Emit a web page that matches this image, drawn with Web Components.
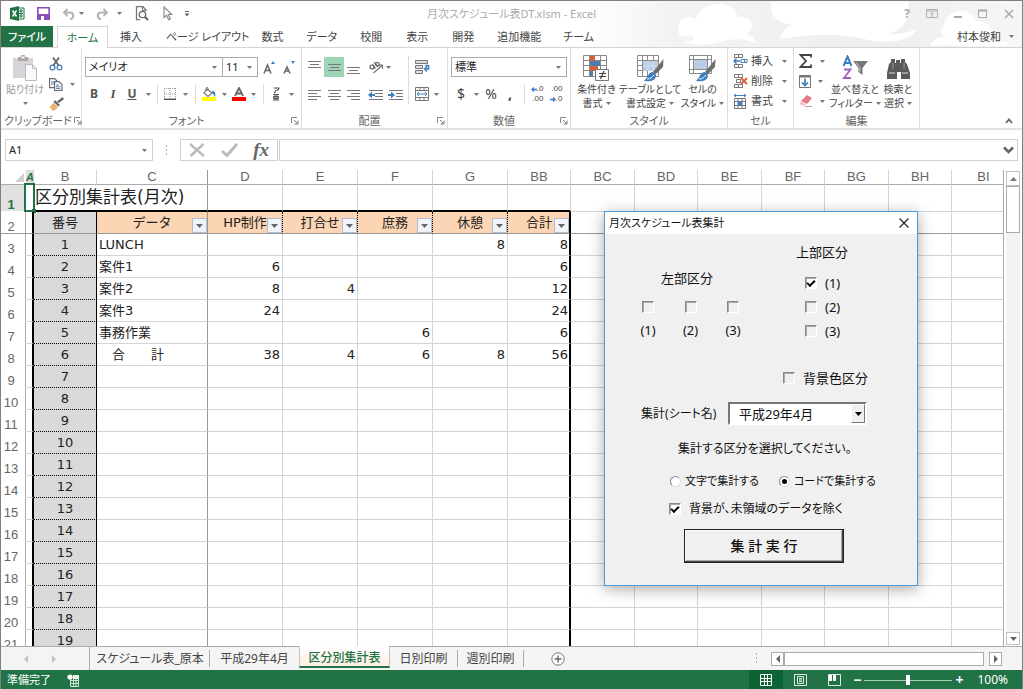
<!DOCTYPE html>
<html lang="ja">
<head>
<meta charset="utf-8">
<title>月次スケジュール表DT.xlsm - Excel</title>
<style>
html,body{margin:0;height:100%}
body{background:#d4d4d4;font:11px/14px "Noto Sans","Noto Sans CJK JP",sans-serif;font-feature-settings:"palt";color:#444}
</style>
</head>
<body>
<excel-app></excel-app>
<script>
const BASE = `*{box-sizing:border-box}
button{appearance:none;border:0;background:none;padding:0;margin:0;font:inherit;color:inherit;font-feature-settings:inherit;display:flex;align-items:center;justify-content:center}
a{color:inherit;text-decoration:none}`;

function define(name, html, setup) {
  const t = document.createElement('template');
  t.innerHTML = html.replace('<style>', '<style>' + BASE);
  customElements.define(name, class extends HTMLElement {
    constructor() {
      super();
      this.attachShadow({mode: 'open'}).append(t.content.cloneNode(true));
    }
    connectedCallback() { if (setup) setup(this, this.shadowRoot); }
  });
}

/* [width, height, markup] */
const lines = (rows) => rows.map(([x, y, w]) => `<path d="M${x} ${y}.5h${w}" stroke="#777"/>`).join('');
const grid = `<path d="M.5 .5h21v21h-21zM.5 5.5h21M.5 10.5h21M.5 15.5h21M5.5 .5v21M10.5 .5v21M16.5 .5v21" fill="#fff" stroke="#8a8a8a"/>`;
const brush = `<path d="M26.500 4L26 12L18.500 19.500L16 17z" fill="#6d6d6d"/><path d="M16 17c-5 0-4 4-9 9c6 1 12 0 12-6z" fill="#3f7fbf"/><path d="M10 24c4 0 5-2 7-4" stroke="#fff" fill="none"/>`;
const cells = `<path d="M1.5 .5h4v3h-4zM5.5 .5h4v3h-4zM1.5 10.5h4v3h-4zM5.5 10.5h4v3h-4z" fill="none" stroke="#777"/>`;
const ICONS = {
  arrow: [5, 3, `<path d="M0 0h5l-2.500 3z" fill="#777"/>`],
  excel: [15, 15, `<path d="M8 2h6v11H8z" fill="#fff" stroke="#217346"/><path d="M9 5h4M9 7.500h4M9 10h4M11 3v9" stroke="#217346"/><path d="M0 2l9-2v15l-9-2z" fill="#217346"/><path d="M2.500 4.500l4 6M6.500 4.500l-4 6" stroke="#fff" stroke-width="1.500"/>`],
  save: [13, 13, `<path d="M.8 .8h11.400v11.400H.8z" fill="none" stroke="#8a4fb8" stroke-width="1.600"/><path d="M1 7h11v5H1z" fill="#8a4fb8"/><path d="M4 9h3v4H4z" fill="#fff"/>`],
  undo: [14, 12, `<path d="M2 4.500h7a3.500 3.500 0 0 1 0 6.500H8M5.500 1L2 4.500L5.500 8" fill="none" stroke="#b4b4b4" stroke-width="2"/>`],
  redo: [14, 12, `<path d="M12 4.500H5a3.500 3.500 0 0 0 0 6.500h1M8.500 1L12 4.500L8.500 8" fill="none" stroke="#b4b4b4" stroke-width="2"/>`],
  preview: [14, 15, `<path d="M11 5V4L8 .7H1.500v13H5" fill="none" stroke="#777" stroke-width="1.300"/><path d="M7.500 1v3.500H11" fill="none" stroke="#777"/><circle cx="7.500" cy="8.500" r="3.200" fill="none" stroke="#666" stroke-width="1.300"/><path d="M10 11l3 3" stroke="#666" stroke-width="2"/>`],
  cursor: [10, 15, `<path d="M1 1v10.500l2.600-2.300l2 4.600l1.800-.8l-2-4.500h3.400z" fill="#fff" stroke="#8c8c8c" stroke-width="1.200"/>`],
  custom: [6, 6, `<path d="M1 .5h4" stroke="#666"/><path d="M.5 2.500h5L3 5.500z" fill="#666"/>`],
  wribbon: [12, 10, `<path d="M.5 .5h11v8h-11z" fill="none" stroke="#b0b0b0"/><path d="M.5 2h11" stroke="#b0b0b0"/><path d="M6 8V4M4 5.500l2-2l2 2" stroke="#b0b0b0" fill="none"/>`],
  wmin: [8, 10, `<path d="M0 8h8" stroke="#aaa" stroke-width="2"/>`],
  wmax: [10, 10, `<path d="M.5 1.500h8v7h-8z" fill="none" stroke="#aaa"/><path d="M0 1.500h9" stroke="#aaa" stroke-width="2"/>`],
  wclose: [10, 10, `<path d="M1 1l8 8M9 1L1 9" stroke="#aaa" stroke-width="1.600"/>`],
  paste: [26, 27, `<path d="M1 3h20v20H1z" fill="#d7d3d6"/><path d="M6 2h2.500l1-2h3l1 2H16v4H6z" fill="#aaa6a9"/><path d="M9.500 1.500h3v2h-3z" fill="#fff"/><path d="M13.500 9.500h7l4 4v12h-11z" fill="#fbfafc" stroke="#bcb8c0"/><path d="M20.500 9.500v4h4" fill="none" stroke="#bcb8c0"/>`],
  cut: [14, 14, `<path d="M4 .5l6 8.500M10 .5L4 9" stroke="#666" stroke-width="1.800"/><circle cx="3.500" cy="10.500" r="2.400" fill="none" stroke="#4a7eb5" stroke-width="1.300"/><circle cx="10.500" cy="10.500" r="2.400" fill="none" stroke="#4a7eb5" stroke-width="1.300"/>`],
  copy: [14, 13, `<path d="M.6 .6h5l3 3v6h-8z" fill="#fff" stroke="#666" stroke-width="1.100"/><path d="M2 4h3M2 6h3" stroke="#4a7eb5"/><path d="M5.600 3.600h4.400l3 3v6H5.600z" fill="#fff" stroke="#666" stroke-width="1.100"/><path d="M7 7h3M7 8.800h4.500M7 10.600h4.500" stroke="#4a7eb5"/>`],
  painter: [15, 14, `<path d="M13.500 0L15 2l-5 4l-2-1.500z" fill="#666"/><path d="M6 3l5 5l-1.500 1.500L4.500 5z" fill="#666"/><path d="M4 5.500L9 10c-2 3-5 4-6 4c0-2-1-3-3-4c2-1 3-2 4-4.500z" fill="#edb26a"/>`],
  grow: [12, 13, `<path d="M8 3L10 0l2 3z" fill="#3f7fbf"/><path d="M1 12.500L4.500 4L8 12.500M2 9.500h5" stroke="#666" stroke-width="1.500" fill="none"/>`],
  shrink: [12, 13, `<path d="M8 0h4L10 3z" fill="#3f7fbf"/><path d="M1 12.500L4 6L7 12.500M2 10h4" stroke="#666" stroke-width="1.500" fill="none"/>`],
  borders: [12, 12, `<path d="M.5 0v11M6 0v11M11.500 0v11M0 .5h12M0 6h12" stroke="#999" stroke-dasharray="1 1"/><path d="M0 11.300h12" stroke="#555" stroke-width="1.400"/>`],
  fill: [14, 14, `<path d="M0 10h14v4H0z" fill="#ff0"/><path d="M5 2L10 6L6 9.500L2 6z" fill="#fff" stroke="#777" stroke-width="1.200"/><path d="M4 4V1c0-1 2-1 2 0v3" fill="none" stroke="#777"/><path d="M10 4c3 0 4 2 3 6c-1-1-1-3-3-4z" fill="#3f7fbf"/>`],
  fcolor: [14, 14, `<path d="M0 10h14v4H0z" fill="#f00"/><path d="M3 9L7 1L11 9M4.500 6.500h5" stroke="#666" stroke-width="1.800" fill="none"/>`],
  furi: [8, 14, `<path d="M1.500 1h5.500c0 1-1 2-2 2.500M4 2.500c0 2-1 3-2 3.500" fill="none" stroke="#555" stroke-width="1.200"/><path d="M1 7.500h6M1 13h6M3 7.500V13M5 7.500V13M1.500 9.500h5v2h-5z" fill="none" stroke="#555"/>`],
  top: [13, 13, lines([[0, 0, 13], [2, 3, 9], [0, 6, 13]])],
  middle: [13, 13, lines([[0, 3, 13], [2, 6, 9], [0, 9, 13]])],
  bottom: [13, 13, lines([[0, 6, 13], [2, 9, 9], [0, 12, 13]])],
  left: [13, 13, lines([[0, 2, 13], [0, 5, 9], [0, 8, 13], [0, 11, 9]])],
  center: [13, 13, lines([[0, 2, 13], [2, 5, 9], [0, 8, 13], [2, 11, 9]])],
  right: [13, 13, lines([[0, 2, 13], [4, 5, 9], [0, 8, 13], [4, 11, 9]])],
  orient: [15, 13, `<path d="M4.500 12L13 4.500M13.500 8V4H9.500" stroke="#777" stroke-width="1.200" fill="none"/><circle cx="3" cy="6" r="2" fill="none" stroke="#555" stroke-width="1.200"/><path d="M3.500 3.500L6.500 7.500M5 1L9 6" stroke="#555" stroke-width="1.200"/><circle cx="8.500" cy="3.300" r="1.800" fill="none" stroke="#555" stroke-width="1.200"/>`],
  outdent: [15, 13, lines([[1, 2, 14], [7, 5, 8], [7, 8, 8], [1, 11, 14]]) + `<path d="M0 7l4-3.500v2.500h3v2H4v2.500z" fill="#3f7fbf"/>`],
  indent: [15, 13, lines([[1, 2, 14], [8, 5, 7], [8, 8, 7], [1, 11, 14]]) + `<path d="M7 7L3 3.500v2.500H0v2h3v2.500z" fill="#3f7fbf"/>`],
  wrap: [15, 14, `<path d="M.5 .5h12v3H.5zM.5 5.500h7v3h-7zM.5 10.500h7v3h-7z" fill="#ddd" stroke="#777"/><path d="M10 5.500h3.500v3.500H10M12 6.500L9.500 9L12 11.500" fill="none" stroke="#3f7fbf" stroke-width="1.500"/>`],
  merge: [14, 14, `<path d="M.5 .5h13v13H.5zM.5 3.500h13M.5 10.500h13M5 .5v3M9 .5v3M5 10.500v3M9 10.500v3" fill="none" stroke="#777"/><path d="M2 7h10M4 5L2 7l2 2M10 5l2 2l-2 2" stroke="#3f7fbf" fill="none"/>`],
  decarrow: [6, 5, `<path d="M6 2.500H1M3 .5l-2 2l2 2" stroke="#3f7fbf" stroke-width="1.300" fill="none"/>`],
  incarrow: [6, 5, `<path d="M0 2.500h5M3 .5l2 2l-2 2" stroke="#3f7fbf" stroke-width="1.300" fill="none"/>`],
  cond: [27, 27, `<path d="M.5 .5h23v21H.5zM.5 5.500h23M.5 10.500h23M.5 15.500h23M6.500 .5v21M17.500 .5v21" fill="#fff" stroke="#8a8a8a"/><path d="M7 1h5v5H7z" fill="#d9603b"/><path d="M7 6h10v5H7z" fill="#4a7eb5"/><path d="M7 11h8v5H7z" fill="#d9603b"/><path d="M7 16h3v5H7z" fill="#4a7eb5"/><path d="M12.500 14.500h13v11h-13z" fill="#fff" stroke="#777"/><path d="M16 18.500h7M16 21.500h7M21 16l-3.500 8" stroke="#444" stroke-width="1.200"/>`],
  tfmt: [27, 27, grid + `<path d="M6 6h15v10H6z" fill="#b9cde5"/><path d="M11 6v10M16 6v10M6 11h15" stroke="#d6e2f0"/>` + brush],
  cstyle: [27, 27, `<path d="M.5 .5h22v18h-22zM.5 4.500h22M.5 14.500h22M4.500 .5v18M18.500 .5v18" fill="#fff" stroke="#8a8a8a"/><path d="M5 5h13v9H5z" fill="#b9cde5"/>` + brush],
  insert: [15, 14, cells + `<path d="M8 5.500h6v3H8zM11.500 5.500v3" fill="#fff" stroke="#4a7eb5"/><path d="M7 7H1M3.500 4.500L1 7l2.500 2.500" stroke="#3f7fbf" stroke-width="1.500" fill="none"/>`],
  remove: [15, 14, cells + `<path d="M3.500 5.500h4v3h-4z" fill="none" stroke="#777"/><path d="M8 4l6 6M14 4l-6 6" stroke="#d9603b" stroke-width="1.800"/>`],
  format: [15, 15, `<path d="M1.500 4.500h11v10h-11zM1.500 7.500h11M1.500 11.500h11M5 4.500v10M9 4.500v10" fill="none" stroke="#777"/><path d="M5 7h4v5H5z" fill="#3f7fbf"/><path d="M1 1.500h12M3 0L1 1.500L3 3M11 0l2 1.500L11 3" stroke="#3f7fbf" fill="none"/>`],
  sum: [14, 14, `<path d="M12 3.500V1H1.500l5.500 6l-5.500 6H12v-2.500" fill="none" stroke="#444" stroke-width="1.800"/>`],
  down: [12, 13, `<path d="M.5 .5h11v12H.5z" fill="#fff" stroke="#777"/><path d="M0 1.500h12" stroke="#777" stroke-width="2"/><path d="M6 3.500v7M3 7.500l3 3l3-3" fill="none" stroke="#3f7fbf" stroke-width="1.700"/>`],
  erase: [14, 12, `<path d="M8 0l5 3l-5 6l-6-3z" fill="#e87b8b"/><path d="M2 6.500l5 3l-1 1H3L.5 8.500z" fill="#f5bcc4"/><path d="M6 11.500h7" stroke="#aaa"/>`],
  sort: [27, 27, `<path d="M1.500 11L5.500 1.500L9.500 11M3 8h5" fill="none" stroke="#3f7fbf" stroke-width="2"/><path d="M2 14.500h6.500l-6.500 8.500h7" fill="none" stroke="#a05cc0" stroke-width="1.800"/><path d="M11 6h15l-5.500 7v7l-4-3v-4z" fill="#777"/><path d="M14 7.500l4 5v4" stroke="#ccc" fill="none"/>`],
  find: [24, 24, `<path d="M5 3h4v4h1v-3h4v3h1V3h4v3l2 2l3 9v6h-9v-7h-4v7H1v-6L3 8l2-2z" fill="#5a5a5a"/><path d="M3 17h6M16 17h6" stroke="#ddd"/><path d="M7 7v6M18 7v6" stroke="#999"/>`],
  launcher: [8, 8, `<path d="M.5 6V.5H6" fill="none" stroke="#888"/><path d="M3 3l3.500 3.500M7 3.500V7H3.500" stroke="#777" fill="none"/>`],
  up: [8, 6, `<path d="M1 5l3-3.500L7 5" fill="none" stroke="#666" stroke-width="1.800"/>`],
  vdots: [3, 11, `<path d="M1 1h1M1 5h1M1 9h1" stroke="#999" stroke-width="1.500"/>`],
  cancel: [16, 14, `<path d="M1 1l14 12M14.500 1L1.500 13" stroke="#bbb" stroke-width="2.400"/>`],
  ok: [17, 14, `<path d="M1 8l5 4.500L16 1" fill="none" stroke="#bbb" stroke-width="3"/>`],
  expand: [11, 8, `<path d="M1 1.500L5.500 6L10 1.500" fill="none" stroke="#666" stroke-width="2.600"/>`],
  corner: [9, 9, `<path d="M9 0v9H0z" fill="#d0d0d0"/>`],
  x: [10, 10, `<path d="M.5 .5l9 9M9.500 .5l-9 9" stroke="#222" stroke-width="1.200"/>`],
  black: [7, 4, `<path d="M0 0h7L3.500 4z" fill="#000"/>`],
  fdrop: [7, 4, `<path d="M0 0h7L3.500 4z" fill="#666"/>`],
  tl: [4, 8, `<path d="M4 0v8L0 4z" fill="#c4c4c4"/>`],
  tr: [4, 8, `<path d="M0 0v8l4-4z" fill="#c4c4c4"/>`],
  sl: [4, 8, `<path d="M4 0v8L0 4z" fill="#666"/>`],
  sr: [4, 8, `<path d="M0 0v8l4-4z" fill="#666"/>`],
  su: [7, 4, `<path d="M0 4h7L3.500 0z" fill="#777"/>`],
  plus: [14, 14, `<circle cx="7" cy="7" r="6.200" fill="#fff" stroke="#777"/><path d="M7 3.500v7M3.500 7h7" stroke="#666" stroke-width="1.400"/>`],
  macro: [13, 13, `<path d="M3.500 3.500h8v9h-8zM3.500 6.500h8M3.500 9.500h8M6.500 5v7.500M9 5v7.500" fill="none" stroke="#cfe3d6"/><path d="M6 1h6v4H6z" fill="#e6f2ea"/><circle cx="3" cy="3" r="2.600" fill="#fff"/>`],
  vnormal: [12, 12, `<path d="M.5 .5h11v11H.5zM.5 4.500h11M.5 7.500h11M4.500 .5v11M7.500 .5v11" fill="none" stroke="#fff"/>`],
  vpage: [13, 12, `<path d="M.5 .5h12v11H.5zM3.500 2.500h6v7h-6zM5 4.500h3M5 6h3M5 7.500h3" fill="none" stroke="#dcebe1"/>`],
  vbreak: [13, 12, `<path d="M.5 .5h12v11H.5z" fill="none" stroke="#dcebe1"/><path d="M1 1h3v6H1zM5 1h3v6H5z" fill="#fff"/>`],
};
define('ui-icon', `<style>:host{display:block;flex:none;line-height:0}svg{display:block}</style>`, (el, root) => {
  const [w, h, m] = ICONS[el.getAttribute('name')];
  root.innerHTML += `<svg width="${w}" height="${h}" viewBox="0 0 ${w} ${h}" fill="none" aria-hidden="true">${m}</svg>`;
});

define('combo-box', `<style>
:host{display:grid;height:20px;border:1px solid #ababab;background:#fff}
select{grid-area:1/1;appearance:none;border:0;background:none;width:100%;min-width:0;padding:0 0 0 3px;font:inherit;font-feature-settings:inherit;color:#222}
ui-icon{grid-area:1/1;place-self:center end;margin-right:5px;pointer-events:none}
</style><select><option></option></select><ui-icon name="arrow"></ui-icon>`, (el, root) => {
  root.querySelector('option').textContent = el.getAttribute('value');
  root.querySelector('select').setAttribute('aria-label', el.getAttribute('label'));
});

define('title-bar', `<style>
:host{display:grid;grid-template-columns:1fr auto 1fr;align-items:center;height:25px}
.q,.w{display:flex;align-items:center}
.q{padding-left:9px}
.q button{width:28px}
.q .save{width:36px}
.q .undo{width:16px}
.q .redo{width:26px;margin-left:4px}
.q .d{width:8px}
.q .d+.view{margin-left:5px}
.q .pick{width:24px}
.q .more{width:14px}
.w{justify-content:flex-end;padding-right:8px;gap:16px;font-weight:700;font-size:12px;color:#aaa}
h1{margin:0;font-size:11px;font-weight:400;color:#aaa}
</style>
<div class="q"><ui-icon name="excel"></ui-icon><button class="save" aria-label="上書き保存"><ui-icon name="save"></ui-icon></button><button class="undo" aria-label="元に戻す"><ui-icon name="undo"></ui-icon></button><button class="d" aria-label="一覧"><ui-icon name="arrow"></ui-icon></button><button class="redo" aria-label="やり直し"><ui-icon name="redo"></ui-icon></button><button class="d" aria-label="一覧"><ui-icon name="arrow"></ui-icon></button><button class="view" aria-label="印刷プレビュー"><ui-icon name="preview"></ui-icon></button><button class="pick" aria-label="選択"><ui-icon name="cursor"></ui-icon></button><button class="more" aria-label="カスタマイズ"><ui-icon name="custom"></ui-icon></button></div>
<h1>月次スケジュール表DT.xlsm - Excel</h1>
<div class="w"><button>?</button><button aria-label="リボン"><ui-icon name="wribbon"></ui-icon></button><button aria-label="最小化"><ui-icon name="wmin"></ui-icon></button><button aria-label="最大化"><ui-icon name="wmax"></ui-icon></button><button aria-label="閉じる"><ui-icon name="wclose"></ui-icon></button></div>`);

define('ribbon-tabs', `<style>
:host{display:flex;height:22px;align-items:stretch;border-bottom:1px solid #d4d4d4;padding-right:8px}
a{display:flex;align-items:center;justify-content:center;min-width:46px;padding:0 11px}
.file{background:#217346;color:#fff;min-width:52px;margin-right:4px;padding:0;font-weight:500}
.on{background:#fff;color:#217346;border:1px solid #d4d4d4;border-bottom:0;margin-bottom:-1px;min-width:51px;padding:0}
.wide{padding:0 0 0 12px}
.user{margin-left:auto;gap:8px;align-self:center}
</style><a class="file" href="#">ファイル</a><a class="on" href="#">ホーム</a><a href="#">挿入</a><a class="wide" href="#">ページ レイアウト</a><a href="#">数式</a><a href="#">データ</a><a href="#">校閲</a><a href="#">表示</a><a href="#">開発</a><a href="#">追加機能</a><a href="#">チーム</a><button class="user">村本俊和<ui-icon name="arrow"></ui-icon></button>`);

define('cloud-art', `<style>:host{display:block}svg{display:block;width:100%;height:100%}</style>
<svg viewBox="0 0 440 47" preserveAspectRatio="xMaxYMid slice"><defs><linearGradient id="g"><stop offset="0" stop-color="#fff"/><stop offset=".2" stop-color="#f3f3f3"/><stop offset=".7" stop-color="#efefef"/><stop offset="1" stop-color="#f6f6f6"/></linearGradient></defs><path d="M0 0h440v47H0z" fill="url(#g)"/><path d="M98 35c-6-12 4-24 16-17c4-16 34-24 42-2c18-2 16 14 8 17c8 2 10 5 9 9c-14-6-26-4-38 0c-14 3-30 2-35-2c12 1 16-2 8-5zM190 0h136c4 14-2 28-20 33c14 0 22-2 28-5c-4 12-28 16-52 10c-28-7-56-4-84 0c2-8 6-12 12-14c-18-2-24-14-20-24zM362 24c2-16 26-20 32-4c14 0 18 10 14 16c8 2 16 4 20 8c-28 4-52-2-80 1c2-6 8-9 16-9c-6-2-6-8-2-12z" fill="#fff"/></svg>`);

define('ribbon-group', `<style>
:host{display:grid;grid-template-rows:1fr 14px;height:80px;border-right:1px solid #dcdcdc;flex:none}
footer{display:grid;grid-template-columns:1fr 13px;align-items:center;white-space:nowrap}
span{grid-area:1/1/2/3;text-align:center;color:#666}
:host([launcher]) span{grid-area:1/1;padding-left:3px}
button{grid-area:1/2}
:host(:not([launcher])) button{display:none}
</style><slot></slot><footer><span></span><button aria-label="詳細"><ui-icon name="launcher"></ui-icon></button></footer>`, (el, root) => {
  root.querySelector('span').textContent = el.getAttribute('label');
});

define('big-button', `<style>
:host{display:block;flex:none}
button{display:grid;width:100%;grid-template-rows:28px 13px 13px;row-gap:1px;font-size:10px;line-height:13px;justify-items:center;white-space:nowrap}
.l2{display:flex;align-items:center;gap:3px}
</style><button><ui-icon name="arrow" id="i"></ui-icon><span class="l1"></span><span class="l2"></span></button>`, (el, root) => {
  const i = document.createElement('ui-icon');
  i.setAttribute('name', el.getAttribute('icon'));
  root.getElementById('i').replaceWith(i);
  root.querySelector('.l1').textContent = el.getAttribute('line1');
  root.querySelector('.l2').innerHTML = (el.getAttribute('line2') || '') + '<ui-icon name="arrow"></ui-icon>';
});

const b = (icon, label = icon, cls = '') => `<button class="${cls}" aria-label="${label}"><ui-icon name="${icon}"></ui-icon></button>`;
const ar = b('arrow', '一覧');
define('ribbon-bar', `<style>
:host{display:flex;height:82px;background:#fff;border-bottom:2px solid #e3e3e3}
.rows{display:grid;grid-template-rows:20px 20px;row-gap:7px;padding:9px 0 0 3px;align-content:start}
.r{display:grid;justify-items:stretch}
i.s{width:1px;background:#dcdcdc;justify-self:center;height:20px}
.t{font-size:12px;font-weight:700;color:#555}
.on{background:#9fd5b7}
.big{display:flex;padding:6px 0 0 1px}
.clip{display:grid;grid-template-columns:48px 1fr;padding-top:6px;color:#999}
.clip div,.cells,.edit{display:grid;grid-template-rows:repeat(3,20px);align-content:start}
.clip div span{display:flex;align-items:center;gap:7px}
.cells{padding:3px 0 0 5px}
.cells button{justify-content:flex-start;gap:3px}.cells button :last-child{margin-left:6px}
.edit{padding:3px 0 0 5px;width:36px}.edit button{justify-content:flex-start;gap:7px}
.dec{font:8px/10px "Liberation Sans",sans-serif;display:grid;justify-content:center;align-content:center;color:#444}
.dec span{display:flex;align-items:center;justify-content:flex-end}
.fold{margin-left:auto;align-self:flex-end;padding:0 9px 4px 0}
</style>
<ribbon-group label="クリップボード" launcher style="width:81px"><div class="clip"><big-button icon="paste" line1="貼り付け"></big-button><div><span>${b('cut')}</span><span>${b('copy')}${ar}</span><span>${b('painter')}</span></div></div></ribbon-group>
<ribbon-group label="フォント" launcher style="width:220px"><div class="rows">
<div class="r" style="grid-template-columns:138px 35px 21px 19px"><combo-box label="フォント" value="メイリオ"></combo-box><combo-box label="サイズ" value="11" style="margin-left:-1px"></combo-box>${b('grow')}${b('shrink')}</div>
<div class="r" style="grid-template-columns:18px 20px 18px 14px 4px 22px 8px 12px 16px 14px 16px 12px 8px 18px 12px"><button class="t">B</button><button class="t"><em style="font-family:'Liberation Serif';font-size:13px">I</em></button><button class="t"><u>U</u></button>${ar}<i class="s"></i>${b('borders')}${ar}<i class="s"></i>${b('fill')}${ar}${b('fcolor')}${ar}<i class="s"></i>${b('furi')}${ar}</div></div></ribbon-group>
<ribbon-group label="配置" launcher style="width:146px"><div style="display:flex"><div class="rows">
<div class="r" style="grid-template-columns:19px 20px 19px 6px 14px 10px">${b('top')}${b('middle', 'middle', 'on')}${b('bottom')}<i></i>${b('orient')}${ar}</div>
<div class="r" style="grid-template-columns:19px 20px 19px 3px 19px 20px">${b('left')}${b('center')}${b('right')}<i></i>${b('outdent')}${b('indent')}</div></div>
<i class="s" style="height:48px;margin:8px 0 0 3px"></i>
<div class="rows"><div class="r" style="grid-template-columns:20px 8px">${b('wrap')}</div><div class="r" style="grid-template-columns:20px 8px">${b('merge')}${ar}</div></div></div></ribbon-group>
<ribbon-group label="数値" launcher style="width:123px"><div class="rows"><combo-box label="表示形式" value="標準" style="width:116px"></combo-box>
<div class="r" style="grid-template-columns:20px 10px 20px 18px 10px 16px 22px;font-size:14px"><button>$</button>${ar}<button>%</button><button style="font-weight:700">,</button><i class="s"></i><button class="dec" aria-label="小数点以下の表示桁数を増やす"><span><ui-icon name="decarrow"></ui-icon>.0</span><span>.00</span></button><button class="dec" aria-label="小数点以下の表示桁数を減らす"><span>.00</span><span><ui-icon name="incarrow"></ui-icon>.0</span></button></div></div></ribbon-group>
<ribbon-group label="スタイル" style="width:157px"><div class="big"><big-button icon="cond" line1="条件付き" line2="書式" style="width:49px"></big-button><big-button icon="tfmt" line1="テーブルとして" line2="書式設定" style="width:58px"></big-button><big-button icon="cstyle" line1="セルの" line2="スタイル" style="width:47px"></big-button></div></ribbon-group>
<ribbon-group label="セル" style="width:66px"><div class="cells"><button><ui-icon name="insert"></ui-icon>挿入<ui-icon name="arrow"></ui-icon></button><button><ui-icon name="remove"></ui-icon>削除<ui-icon name="arrow"></ui-icon></button><button><ui-icon name="format"></ui-icon>書式<ui-icon name="arrow"></ui-icon></button></div></ribbon-group>
<ribbon-group label="編集" style="width:126px"><div style="display:flex"><div class="edit"><button aria-label="合計"><ui-icon name="sum"></ui-icon><ui-icon name="arrow"></ui-icon></button><button aria-label="フィル"><ui-icon name="down"></ui-icon><ui-icon name="arrow"></ui-icon></button><button aria-label="クリア"><ui-icon name="erase"></ui-icon><ui-icon name="arrow"></ui-icon></button></div><div class="big"><big-button icon="sort" line1="並べ替えと" line2="フィルター" style="width:48px"></big-button><big-button icon="find" line1="検索と" line2="選択" style="width:38px"></big-button></div></div></ribbon-group>
<button class="fold" aria-label="リボンを折りたたむ"><ui-icon name="up"></ui-icon></button>`);

define('formula-bar', `<style>
:host{display:grid;grid-template-columns:148px 25px 98px 1fr;column-gap:1px;padding:9px 4px 0 4px;height:40px;background:#fff}
combo-box{height:22px;border-color:#d0d0d0}
.b{display:flex;align-items:center;justify-content:center;height:22px}
.tools{border:1px solid #d0d0d0;justify-content:space-between;padding:0 8px}
.fx{font:italic 700 19px/20px "Liberation Serif",serif;color:#666}
.in{display:grid;height:22px;border:1px solid #d0d0d0}
input{grid-area:1/1;border:0;width:100%;min-width:0;padding:0 4px;background:none;font:inherit}
.in button{grid-area:1/1;place-self:center end;margin-right:3px}
</style><combo-box label="名前ボックス" value="A1"></combo-box><div class="b"><ui-icon name="vdots"></ui-icon></div><div class="b tools">${b('cancel')}${b('ok')}<button class="fx">fx</button></div><div class="in"><input aria-label="数式">${b('expand')}</div>`);

const COLS = ['A', 'B', 'C', 'D', 'E', 'F', 'G', 'BB', 'BC', 'BD', 'BE', 'BF', 'BG', 'BH', 'BI'];
const WIDTHS = [25, 8, 63, 111, 75, 75, 75, 75, 63, 64, 63, 64, 63, 64, 63, 64];
const DATA = {
  3: ['LUNCH', '', '', '', '8', '8'], 4: ['案件1', '6', '', '', '', '6'], 5: ['案件2', '8', '4', '', '', '12'],
  6: ['案件3', '24', '', '', '', '24'], 7: ['事務作業', '', '', '6', '', '6'], 8: ['　合　　計', '38', '4', '6', '8', '56'],
};
define('sheet-grid', `<style>
:host{display:block;min-width:0;overflow:hidden;border-right:1px solid #ababab;background:#fff}
table{border-collapse:separate;border-spacing:0;table-layout:fixed;font:13px/20px "DejaVu Sans","Noto Sans CJK JP",sans-serif;font-feature-settings:normal;color:#222}
th,td{padding:0 2px;border-right:1px solid #d4d4d4;border-bottom:1px solid #d4d4d4;font-weight:400;white-space:nowrap;height:22px;text-align:right;overflow:hidden}
thead th{height:15px;line-height:14px;font-family:"Liberation Sans",sans-serif;color:#666;text-align:center;border-bottom-color:#ababab}
thead th:nth-child(2){background:#dcdcdc;color:#217346;padding:0;font-size:11px;font-style:italic;font-weight:700}
thead th:first-child{text-align:right;border-right:0}
thead ui-icon{float:right}
tbody th{font:13px/12px "Liberation Sans",sans-serif;color:#666;vertical-align:bottom;text-align:center;border-right-color:#ababab;border-bottom-color:#fff;padding:0 4px 0 0}
td.a{padding:0;position:relative;overflow:visible;border-right:2px solid #000}
.r1 td{height:27px;border-bottom:2px solid #000}
.r1 th{background:#e1e1e1;color:#217346;font-weight:700}
.r1 td.a{border-right:0;border-bottom:1px solid #d4d4d4}
.r1 td.o,.r2 td.o{border-bottom-width:1px}
.r1 td.o{border-bottom-color:#d4d4d4}
.r1 td.title{font-size:17px;text-align:left;padding:0 0 2px 1px}
td.b{background:#d9d9d9;text-align:center;border-right-color:#000;border-bottom:1px dotted #000}
td.c{text-align:left}
thead th:nth-child(4),td.c,td.title{border-right-color:#999}
td.bb{border-right:2px solid #000;padding-right:1px}
.r1 td.bb{border-right:1px solid #d4d4d4}
.r2 td,.r2 th{border-bottom:1px solid #999}
.r2 td.h{background:#fcd5b4;text-align:center;position:relative;border-right:1px dotted #000}
.r2 td.bb{border-right:2px solid #000}
.r2 td.c{border-right:1px solid #999}
td button{position:absolute;right:0;bottom:0;width:15px;height:15px;background:#f0f4fa;border:1px solid #b4bccb}
.sel{position:absolute;left:-2px;top:-2px;right:-1px;bottom:-1px;border:2px solid #217346}
.sel::after{content:"";position:absolute;right:-3px;bottom:-3px;width:4px;height:4px;background:#217346}
</style><table><colgroup></colgroup><thead><tr></tr></thead><tbody></tbody></table>`, (el, root) => {
  root.querySelector('table').style.width = WIDTHS.reduce((a, w) => a + w) + 'px';
  root.querySelector('colgroup').innerHTML = WIDTHS.map(w => `<col style="width:${w}px">`).join('');
  root.querySelector('thead tr').innerHTML = '<th><ui-icon name="corner"></ui-icon></th>' + COLS.map(c => `<th>${c}</th>`).join('');
  const out = Array.from({length: 7}, () => '<td class="o"></td>').join('');
  const cls = ['c', '', '', '', '', 'bb'];
  let rows = `<tr class="r1"><th>1</th><td class="a"><div class="sel"></div></td><td class="title" colspan="2">区分別集計表(月次)</td><td></td><td></td><td></td><td></td><td class="bb"></td>${out}</tr>`;
  rows += `<tr class="r2"><th>2</th><td class="a"></td><td class="b">番号</td>` + ['データ', 'HP制作', '打合せ', '庶務', '休憩', '合計'].map((t, i) => `<td class="h ${cls[i]}">${t}<button aria-label="${t}のフィルター"><ui-icon name="fdrop"></ui-icon></button></td>`).join('') + out + '</tr>';
  for (let r = 3; r < 22; r++) {
    const d = DATA[r] || ['', '', '', '', '', ''];
    rows += `<tr><th>${r}</th><td class="a"></td><td class="b">${r - 2}</td>` + d.map((t, i) => `<td class="${cls[i]}">${t}</td>`).join('') + out + '</tr>';
  }
  root.querySelector('tbody').innerHTML = rows;
});

define('v-scroll', `<style>
:host{display:grid;grid-template-rows:15px 1fr 13px;background:#f3f3f3;border-bottom:1px solid #fff;margin:1px 2px 0 2px}
button{border:1px solid #c0c0c0;background:#fff}
.thumb{height:47px;border:1px solid #ababab;background:#fff}
</style>${b('su', '上へ')}<div class="thumb"></div>${b('fdrop', '下へ')}`);

define('check-box', `<style>
:host{display:block}
label{display:flex;align-items:center;gap:var(--gap,8px)}
:host([stack]) label{flex-direction:column;gap:9px}
input{appearance:none;margin:0;width:12px;height:12px;flex:none;background:#f0f0f0;border:1px solid;border-color:#888 #fff #fff #888;box-shadow:inset 1px 1px #aaa;display:grid;place-content:center}
input:checked{background:#fff}
input:checked::after{content:"";width:6px;height:3px;border:solid #000;border-width:0 0 2px 2px;rotate:-45deg;margin-top:-2px}
input[type=radio]{border-radius:50%;width:11px;height:11px;background:#fff;box-shadow:none;border-color:#888 #ddd #ddd #888}
input[type=radio]:checked::after{width:5px;height:5px;border:0;border-radius:50%;background:#000;rotate:none;margin:0}
</style><label><input type="checkbox"><span><slot></slot></span></label>`, (el, root) => {
  const i = root.querySelector('input');
  if (el.hasAttribute('radio')) i.type = 'radio';
  i.checked = el.hasAttribute('checked');
});

define('macro-dialog', `<style>
:host{display:block;width:314px;border:1px solid #4a9bdc;background:#f0f0f0;box-shadow:0 3px 14px rgba(0,0,0,.35);color:#111;font-size:13px;line-height:16px}
header{display:flex;justify-content:space-between;align-items:center;height:22px;background:#fff;padding:0 8px 0 4px;font-size:11px}
.body{display:grid;padding:10px 20px 22px 32px}
.top{display:grid;grid-template-columns:115px 1fr;height:99px}
.left{padding-top:26px}
.marks{display:flex;justify-content:space-between;padding:15px 8px 0 0}
.marks check-box{width:22px}
.right{padding-left:37px}
b{font-weight:400;display:block}
.right b{padding-left:7px}
.left b{padding-left:24px}
.right .col{display:grid;gap:8px;padding:15px 0 0 16px}
.bg{display:flex;padding:27px 0 0 146px}
.sel{display:grid;grid-template-columns:91px 139px;align-items:center;margin-top:16px}
.sel label{padding-left:4px;font-size:12px}
.cb{display:grid;grid-template-columns:1fr 14px;height:23px;border:2px solid;border-color:#777 #fff #fff #777;background:#fff}
select{grid-area:1/1/2/3;appearance:none;border:0;background:none;font:inherit;font-feature-settings:inherit;padding:0 0 0 9px;color:#111}
.cb span{grid-area:1/2;background:#f0f0f0;border:1px solid;border-color:#fff #777 #777 #fff;display:grid;place-content:center;pointer-events:none}
p{margin:16px 0 0 41px;font-size:12px}
.radios{display:flex;gap:20px;margin:16px 0 0 33px;font-size:11px;white-space:nowrap;--gap:4px}
.last{margin:12px 0 0 32px;font-size:12px}
.run{justify-self:start;width:160px;height:34px;margin:12px 0 0 47px;border:1px solid #222;box-shadow:inset -1px -1px #444,inset 1px 1px #fff,inset -2px -2px #aaa;font-size:14px;font-weight:500;white-space:pre}
</style><header><span>月次スケジュール表集計</span><button aria-label="閉じる"><ui-icon name="x"></ui-icon></button></header>
<div class="body"><div class="top"><div class="left"><b>左部区分</b><div class="marks"><check-box stack>(1)</check-box><check-box stack>(2)</check-box><check-box stack>(3)</check-box></div></div>
<div class="right"><b>上部区分</b><div class="col"><check-box checked>(1)</check-box><check-box>(2)</check-box><check-box>(3)</check-box></div></div></div>
<div class="bg"><check-box>背景色区分</check-box></div>
<div class="sel"><label for="s">集計(シート名)</label><div class="cb"><select id="s"><option>平成29年4月</option></select><span><ui-icon name="black"></ui-icon></span></div></div>
<p>集計する区分を選択してください。</p>
<div class="radios"><check-box radio>文字で集計する</check-box><check-box radio checked>コードで集計する</check-box></div>
<check-box class="last" checked>背景が、未領域のデータを除く</check-box>
<button class="run">集 計 実 行</button></div>`);

define('sheet-tabs', `<style>
:host{display:flex;align-items:stretch;height:24px;background:#f4f4f4;border-top:1px solid #ababab;font-size:12px}
.nav{display:flex;width:89px;padding:0 33px 0 23px;justify-content:space-between;border-right:1px solid #ababab;flex:none}
a{display:flex;align-items:center;justify-content:center;padding:0 10px;margin-right:-1px;white-space:nowrap;position:relative;flex:none}
a::after{content:"";position:absolute;right:0;top:3px;bottom:3px;width:1px;background:#ababab}
.on{color:#217346;font-weight:500;background:linear-gradient(#fff,#fdeee2);border:1px solid #c4c4c4;border-top:0;border-bottom:2px solid #217346;margin:-1px -1px 2px 0;padding-top:4px}
.on::after{display:none}
.add{padding:0 28px}
.hs{margin:0 20px 0 auto;width:247px;display:flex;align-items:center;flex:none}
.hs>ui-icon{margin-right:13px}
.hs button{width:13px;height:14px;border:1px solid #ababab;background:#fff}
.th{flex:1;height:14px;border:1px solid #ababab;background:#fff;margin-right:5px}
</style><div class="nav">${b('tl', '前')}${b('tr', '次')}</div><a href="#" style="width:120px">スケジュール表_原本</a><a href="#" style="width:91px">平成29年4月</a><a class="on" href="#" style="width:91px">区分別集計表</a><a href="#" style="width:69px">日別印刷</a><a href="#" style="width:67px">週別印刷</a><button class="add" aria-label="新しいシート"><ui-icon name="plus"></ui-icon></button><div class="hs"><ui-icon name="vdots"></ui-icon>${b('sl', '左へ')}<div class="th"></div>${b('sr', '右へ')}</div>`);

define('status-bar', `<style>
:host{display:flex;align-items:center;height:20px;background:#217346;color:#fff;padding:0 14px 0 6px}
.m{margin-left:16px}
.v{display:flex;margin-left:auto;align-self:stretch}
.v button{width:34px}.v .on{background:#0e6335}
.z{width:12px;font-size:14px;font-weight:700}
input{appearance:none;margin:0 1px;width:88px;height:12px;background:linear-gradient(#a9cdb7,#a9cdb7) center/100% 1px no-repeat}
input::-webkit-slider-thumb{appearance:none;width:4px;height:10px;background:#fff}
output{margin-left:12px;font-size:12px}
</style><span>準備完了</span><button class="m" aria-label="マクロの記録"><ui-icon name="macro"></ui-icon></button><div class="v">${b('vnormal', '標準', 'on')}${b('vpage', 'ページ レイアウト')}${b('vbreak', '改ページ')}</div><button class="z">−</button><input type="range" aria-label="ズーム" value="49"><button class="z">+</button><output>100%</output>`);

define('excel-app', `<style>
:host{display:flex;flex-direction:column;height:100vh;border:1px solid #808080;margin-right:1px;background:#fff;overflow:hidden;border-bottom:0}
.head{display:grid;grid-template-columns:1fr 440px;flex:none}
.head>div{grid-area:1/1/2/3}
cloud-art{grid-area:1/2;height:47px}
.work{flex:1;min-height:0;display:grid;grid-template-columns:minmax(0,1fr) 18px;grid-template-rows:minmax(0,1fr);position:relative}
macro-dialog{position:absolute;left:603px;top:41px}
</style><div class="head"><cloud-art></cloud-art><div><title-bar></title-bar><ribbon-tabs></ribbon-tabs></div></div><ribbon-bar></ribbon-bar><formula-bar></formula-bar><div class="work"><sheet-grid></sheet-grid><v-scroll></v-scroll><macro-dialog></macro-dialog></div><sheet-tabs></sheet-tabs><status-bar></status-bar>`);
</script>
</body>
</html>
